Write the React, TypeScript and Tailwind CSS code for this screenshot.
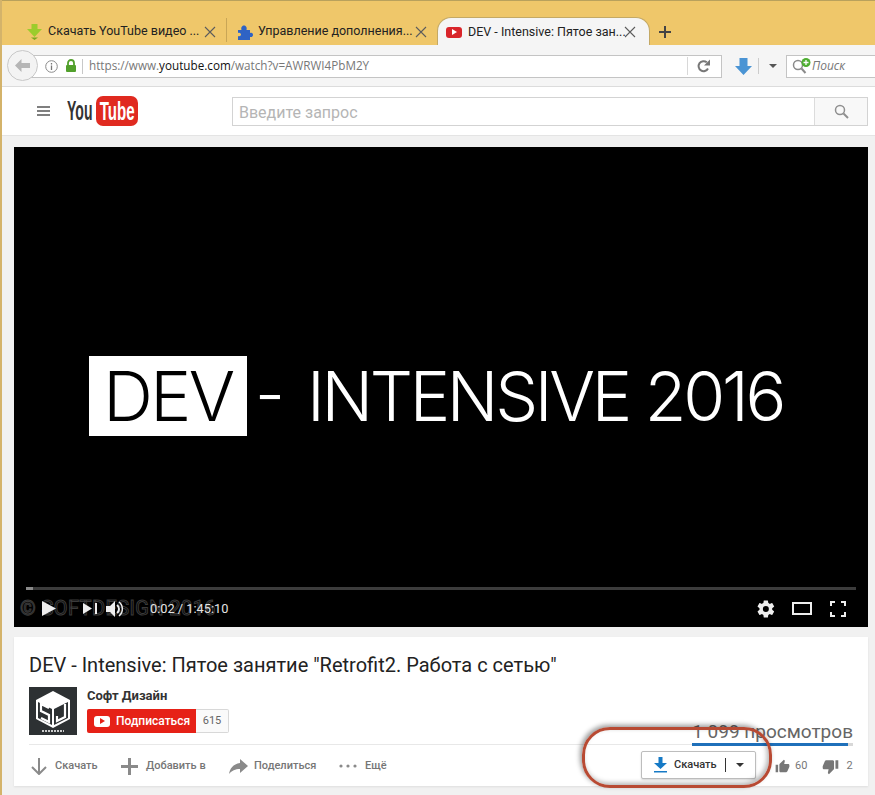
import React from 'react';

const tabFont = "[font-family:Roboto,'Noto_Sans',sans-serif]";
const uiFont = "[font-family:'Open_Sans','Noto_Sans',sans-serif]";
const ytFont = "[font-family:Roboto,'Noto_Sans',sans-serif]";
const logoFont = "[font-family:'Liberation_Sans',sans-serif]";

const CloseIcon: React.FC = () => (
  <svg width="12" height="12" viewBox="0 0 12 12" className="shrink-0">
    <path d="M1 1l10 10M11 1L1 11" stroke="#5c5c5c" strokeWidth="1.1" fill="none" />
  </svg>
);

const Gear: React.FC = () => (
  <svg width="20" height="20" viewBox="0 0 24 24" fill="#eeeeee">
    <path d="M19.4 13c.04-.32.06-.66.06-1s-.02-.68-.07-1l2.16-1.68c.2-.15.25-.42.13-.64l-2.05-3.54c-.12-.22-.4-.3-.62-.22l-2.55 1.02c-.53-.4-1.1-.74-1.72-1l-.38-2.7A.5.5 0 0 0 13.86 1.8H9.77c-.25 0-.46.18-.5.42l-.38 2.7c-.62.26-1.2.6-1.72 1L4.62 4.9c-.23-.08-.5 0-.62.22L1.95 8.68c-.13.22-.07.5.12.64L4.24 11c-.05.32-.08.67-.08 1s.02.68.07 1l-2.16 1.68c-.2.15-.25.42-.13.64l2.05 3.54c.12.22.4.3.62.22l2.55-1.02c.53.4 1.1.74 1.72 1l.38 2.7c.04.24.25.42.5.42h4.09c.25 0 .46-.18.5-.42l.38-2.7c.62-.26 1.2-.6 1.72-1l2.55 1.02c.23.08.5 0 .62-.22l2.05-3.54c.12-.22.07-.5-.13-.64L19.4 13zM11.82 15.6a3.6 3.6 0 1 1 0-7.2 3.6 3.6 0 0 1 0 7.2z" />
  </svg>
);

const ActionItem: React.FC<{ icon: React.ReactNode; label: string; className: string }> = ({ icon, label, className }) => (
  <div className={`flex items-center pt-[2px] ${className}`}>
    {icon}
    <span className="text-[11px] font-medium text-[#767676]">{label}</span>
  </div>
);

export default function App() {
  return (
    <div className={`relative h-[795px] w-[875px] overflow-hidden bg-[#f1f1f1] ${ytFont}`}>
      {/* вкладки */}
      <div className={`flex h-[45px] items-end border-t border-[#b9a15c] bg-[#efc76a] pl-[27px] ${tabFont}`}>
        <div className="flex h-[28px] w-[199px] items-center pt-[1px]">
          <svg width="15" height="16" viewBox="0 0 15 16" className="mr-[6px] shrink-0">
            <path d="M4.5 0h6v5H15l-7.5 8L0 5h4.500z" fill="#9ccc2c" />
            <path d="M4 13.500h7L7.500 16z" fill="#7aa81e" />
          </svg>
          <span className="w-[156px] text-[12.5px] whitespace-nowrap text-[#222]">Скачать YouTube видео ...</span>
          <CloseIcon />
        </div>
        <div className="mb-[3px] h-[24px] w-px bg-[#c9a656]" />
        <div className="ml-[10px] flex h-[28px] w-[200px] items-center pt-[1px]">
          <svg width="16" height="16" viewBox="0 0 16 16" className="mr-[5px] shrink-0">
            <path d="M1 6h3.500c-.8-3 .8-4.500 2.500-4.500S10.300 3 9.500 6H13v3c2.500-.8 3 1 3 2s-.8 2.500-3 2v3H1v-4c2 .6 3-.5 3-1.500S3 8 1 9z" fill="#2f63c4" />
          </svg>
          <span className="w-[157px] text-[12.5px] whitespace-nowrap text-[#222]">Управление дополнения...</span>
          <CloseIcon />
        </div>
        <div className="flex h-[28px] w-[213px] items-center rounded-t-[14px] border border-b-0 border-[#c4a965] bg-[#f5f5f5] pt-[1px] pl-[8px]">
          <span className="mr-[6px] flex h-[11px] w-[16px] shrink-0 items-center justify-center rounded-[3px] bg-[#d9252a]">
            <span className="ml-px h-0 w-0 border-y-[3px] border-l-[5px] border-y-transparent border-l-white" />
          </span>
          <span className="w-[156px] text-[12.5px] whitespace-nowrap text-[#222]">DEV - Intensive: Пятое зан...</span>
          <CloseIcon />
        </div>
        <svg width="12" height="12" viewBox="0 0 12 12" className="mb-[7px] ml-[9px]">
          <path d="M6 0v12M0 6h12" stroke="#444" strokeWidth="2" />
        </svg>
      </div>

      {/* панель адреса */}
      <div className={`relative flex h-[42px] items-center border-b border-[#dcdcdc] bg-[#f5f5f5] pt-[1px] pl-[30px] ${uiFont}`}>
        <div className="absolute top-[5px] left-[7px] z-10 flex h-[31px] w-[31px] items-center justify-center rounded-full border border-[#c8c8c8] bg-[#f3f3f3]">
          <svg width="15" height="13" viewBox="0 0 15 13">
            <path d="M0 6.500L6.500 0v4H15v5H6.500v4z" fill="#b5b5b5" />
          </svg>
        </div>
        <div className="flex h-[23px] w-[692px] items-center border border-l-0 border-[#c4c4c4] bg-white pl-[15px]">
          <svg width="13" height="13" viewBox="0 0 13 13" className="mr-[7px]">
            <circle cx="6.500" cy="6.500" r="5.800" fill="none" stroke="#8a8a8a" />
            <path d="M6.500 3v1.400M6.500 5.600V10" stroke="#777" strokeWidth="1.300" />
          </svg>
          <svg width="12" height="14" viewBox="0 0 12 14" className="mr-[5px]">
            <path d="M3 6V4a3 3 0 0 1 6 0v2" fill="none" stroke="#52a02c" strokeWidth="1.800" />
            <rect x="1" y="6" width="10" height="7" rx="1" fill="#52a02c" />
          </svg>
          <div className="mr-[6px] h-[15px] w-px bg-[#c8c8c8]" />
          <span className="w-[598px] text-[11.7px] whitespace-nowrap text-[#777]">
            https://www.<span className="text-[#111]">youtube.com</span>/watch?v=AWRWI4PbM2Y
          </span>
          <div className="h-[18px] w-px bg-[#d8d8d8]" />
          <svg width="14" height="14" viewBox="0 0 14 14" className="ml-[9px]">
            <path d="M11 9.500A5 5 0 1 1 9.800 3.300" fill="none" stroke="#777" strokeWidth="2" />
            <path d="M13 0.500V6.500H7z" fill="#777" />
          </svg>
        </div>
        <svg width="17" height="17" viewBox="0 0 17 17" className="ml-[13px]">
          <path d="M4.500 0h8v8H17l-8.500 9L0 8h4.500z" fill="#4a94d4" />
        </svg>
        <div className="mx-[6px] h-[16px] w-px bg-[#cccccc]" />
        <span className="ml-[4px] h-0 w-0 border-x-[4px] border-t-[4px] border-x-transparent border-t-[#555]" />
        <div className="ml-[9px] flex h-[23px] flex-1 items-center border border-r-0 border-[#c4c4c4] bg-white pl-[5px]">
          <svg width="20" height="16" viewBox="0 0 20 16">
            <circle cx="6" cy="7" r="4.500" fill="none" stroke="#8a8a8a" strokeWidth="1.500" />
            <path d="M9.500 10.500L13.500 15" stroke="#8a8a8a" strokeWidth="2" />
            <circle cx="14" cy="4.500" r="4.500" fill="#4fae32" />
            <path d="M14 2v5M11.500 4.500h5" stroke="#fff" strokeWidth="1.300" />
          </svg>
          <span className="text-[12px] text-[#777] italic">Поиск</span>
        </div>
      </div>

      {/* шапка ютуба */}
      <div className="flex h-[49px] items-center border-b border-[#e4e4e4] bg-white pr-[7px] pl-[37px]">
        <svg width="13" height="10" viewBox="0 0 13 10" className="mr-[17px] shrink-0">
          <path d="M0 1h13M0 5h13M0 9h13" stroke="#555" strokeWidth="1.700" />
        </svg>
        <div className={`w-[29px] shrink-0 text-[27px] leading-none font-bold text-[#333] ${logoFont}`}>
          <span className="inline-block origin-left scale-x-[0.52]">You</span>
        </div>
        <div className={`flex h-[30px] w-[42px] shrink-0 items-center justify-center rounded-[7px] bg-[#e02a20] text-[26px] leading-none font-bold text-white ${logoFont}`}>
          <span className="inline-block scale-x-[0.58]">Tube</span>
        </div>
        <div className="mt-[1px] ml-[94px] flex h-[29px] flex-1 items-stretch border border-[#d3d3d3] bg-white">
          <span className="flex-1 pl-[6px] text-[16px] leading-[29px] text-[#b5b5b5]">Введите запрос</span>
          <div className="flex w-[53px] items-center justify-center border-l border-[#dcdcdc] bg-[#f8f8f8]">
            <svg width="15" height="15" viewBox="0 0 15 15">
              <circle cx="6" cy="6" r="4.500" fill="none" stroke="#8f8f8f" strokeWidth="1.500" />
              <path d="M9.500 9.500L14 14" stroke="#8f8f8f" strokeWidth="2" />
            </svg>
          </div>
        </div>
      </div>

      {/* плеер */}
      <div className="relative mx-[14px] mt-[11px] flex h-[480px] w-[854px] flex-col bg-black">
        <div className="flex flex-1 items-start pt-[209px] pl-[75px] [font-family:Inter,sans-serif]">
          <div className="flex h-[80px] w-[158px] items-center justify-center bg-white text-[69px] leading-none font-light tracking-[-2.500px] text-black">DEV</div>
          <span className="mt-[5px] ml-[8px] text-[66px] leading-none font-light whitespace-nowrap text-white">-</span>
          <span className="mt-[6px] ml-[22px] text-[68px] leading-none font-light tracking-[-3.300px] whitespace-nowrap text-white">INTENSIVE 2016</span>
        </div>
        <div className="mx-[12px] mb-[8px] flex h-[3px] bg-[#3c3c3c]">
          <div className="h-full w-[7px] bg-[#8a8a8a]" />
        </div>
        <div className="relative flex h-[21px] items-center pl-[28px] text-[#eeeeee]">
          <span className="absolute top-0 left-[6px] text-[20px] leading-[21px] tracking-[0.400px] whitespace-nowrap text-transparent [-webkit-text-stroke:1px_#3a3a3a]">© SOFTDESIGN 2016</span>
          <svg width="14" height="15" viewBox="0 0 14 15" className="relative">
            <path d="M0 0l14 7.500L0 15z" fill="#eeeeee" />
          </svg>
          <svg width="14" height="11" viewBox="0 0 14 11" className="relative ml-[27px]">
            <path d="M0 0l9 5.500L0 11z" fill="#eeeeee" />
            <path d="M12 0h2v11h-2z" fill="#eeeeee" />
          </svg>
          <svg width="18" height="16" viewBox="0 0 18 16" className="relative ml-[9px]">
            <path d="M0 5h4l5-5v16l-5-5H0z" fill="#eeeeee" />
            <path d="M11 4a5 5 0 0 1 0 8" fill="none" stroke="#eeeeee" strokeWidth="2" />
            <path d="M13 1a9 9 0 0 1 0 14" fill="none" stroke="#eeeeee" strokeWidth="1.500" />
          </svg>
          <span className="relative ml-[26px] text-[12.800px] text-[#e4e4e4]">0:02 / 1:45:10</span>
          <div className="ml-auto flex items-center pr-[22px]">
            <Gear />
            <div className="mr-[18px] ml-[16px] h-[13px] w-[20px] border-2 border-[#eeeeee]" />
            <svg width="16" height="16" viewBox="0 0 16 16">
              <path d="M1 5V1h4M11 1h4v4M15 11v4h-4M5 15H1v-4" fill="none" stroke="#eeeeee" strokeWidth="2" />
            </svg>
          </div>
        </div>
        <div className="h-[8px] bg-black" />
      </div>

      {/* блок под видео */}
      <div className="mx-[14px] mt-[10px] h-[149px] w-[854px] bg-white px-[15px] shadow-[0_1px_2px_rgba(0,0,0,0.08)]">
        <h1 className="pt-[15px] text-[20px] leading-[26px] font-normal whitespace-nowrap text-[#222]">DEV - Intensive: Пятое занятие "Retrofit2. Работа с сетью"</h1>
        <div className="mt-[9px] flex h-[58px] items-start border-b border-[#e8e8e8]">
          <div className="flex h-[48px] w-[48px] shrink-0 items-center justify-center bg-[#2d3133]">
            <svg width="36" height="42" viewBox="0 0 36 42">
              <path d="M18 1L35 10V29L18 38L1 29V10Z" fill="#ffffff" />
              <path d="M3 12L17 19V35L3 28Z" fill="#2d3133" />
              <path d="M33 12L19 19V35L33 28Z" fill="#2d3133" />
              <path d="M14 18L6 14V21L14 25V32L6 28" fill="none" stroke="#ffffff" strokeWidth="2.200" />
              <path d="M30 14V27L22 31V26" fill="none" stroke="#ffffff" strokeWidth="2.200" />
              <path d="M7 41H29" stroke="#ffffff" strokeWidth="1.500" strokeDasharray="2 1" />
            </svg>
          </div>
          <div className="ml-[10px]">
            <div className="text-[13px] leading-[17px] font-bold text-[#333]">Софт Дизайн</div>
            <div className="mt-[5px] flex h-[24px]">
              <div className="flex w-[109px] items-center rounded-l-[2px] bg-[#e62117] pl-[7px] text-[12px] font-medium text-white">
                <span className="mr-[6px] flex h-[11px] w-[16px] items-center justify-center rounded-[3px] bg-white">
                  <span className="ml-px h-0 w-0 border-y-[3px] border-l-[5px] border-y-transparent border-l-[#e62117]" />
                </span>
                Подписаться
              </div>
              <div className="flex w-[33px] items-center justify-center rounded-r-[2px] border border-l-0 border-[#d8d8d8] bg-[#fafafa] text-[11px] text-[#666]">615</div>
            </div>
          </div>
          <div className="ml-auto flex h-[58px] w-[161px] flex-col items-end justify-end">
            <div className="text-[19px] leading-[22px] whitespace-nowrap text-[#666]">1 099 просмотров</div>
            <div className="mb-[-1px] flex h-[3px] w-full bg-[#d8d8d8]">
              <div className="h-full w-[156px] bg-[#1f70ba]" />
            </div>
          </div>
        </div>
        <div className="flex h-[40px] items-center">
          <ActionItem
            className="ml-[2px] w-[90px]"
            label="Скачать"
            icon={
              <svg width="16" height="17" viewBox="0 0 16 17" className="mr-[8px]">
                <path d="M8 0v16M1 9l7 7 7-7" fill="none" stroke="#8a8a8a" strokeWidth="2" />
              </svg>
            }
          />
          <ActionItem
            className="w-[108px]"
            label="Добавить в"
            icon={
              <svg width="17" height="17" viewBox="0 0 17 17" className="mr-[8px]">
                <path d="M8.500 0v17M0 8.500h17" stroke="#8a8a8a" strokeWidth="3" />
              </svg>
            }
          />
          <ActionItem
            className="w-[110px]"
            label="Поделиться"
            icon={
              <svg width="19" height="15" viewBox="0 0 19 15" className="mr-[6px]">
                <path d="M11 0l8 7-8 7V10C6 10 3 11.500 0 15c.8-5 4-10 11-11z" fill="#8a8a8a" />
              </svg>
            }
          />
          <ActionItem
            className="w-[100px]"
            label="Ещё"
            icon={
              <svg width="18" height="4" viewBox="0 0 18 4" className="mr-[8px]">
                <circle cx="2" cy="2" r="1.600" fill="#8a8a8a" />
                <circle cx="9" cy="2" r="1.600" fill="#8a8a8a" />
                <circle cx="16" cy="2" r="1.600" fill="#8a8a8a" />
              </svg>
            }
          />
          <div className="ml-[202px] flex h-[28px] w-[115px] shrink-0 items-center rounded-[2px] border border-[#bdbdbd] bg-white pl-[12px] shadow-[0_1px_2px_rgba(0,0,0,0.15)]">
            <svg width="13" height="16" viewBox="0 0 13 16" className="mr-[7px]">
              <path d="M4.500 0h4v6H13L6.500 12 0 6h4.500zM0 14h13v1.500H0z" fill="#167ac6" />
            </svg>
            <span className="text-[11px] font-medium text-[#333]">Скачать</span>
            <div className="ml-[8px] h-[14px] w-px bg-[#333]" />
            <span className="ml-[10px] h-0 w-0 border-x-[4px] border-t-[4px] border-x-transparent border-t-[#333]" />
          </div>
          <div className="ml-[19px] flex items-center pt-[2px] text-[11px] text-[#777]">
            <svg width="15" height="15" viewBox="0 0 24 24" fill="#777" className="mr-[5px]">
              <path d="M1 21h4V9H1v12zm22-11c0-1.100-.9-2-2-2h-6.310l.95-4.570.03-.32c0-.41-.17-.79-.44-1.060L14.170 1 7.590 7.590C7.220 7.950 7 8.450 7 9v10c0 1.100.9 2 2 2h9c.83 0 1.540-.5 1.840-1.220l3.020-7.050c.09-.23.14-.47.14-.73v-2z" />
            </svg>
            60
            <svg width="17" height="17" viewBox="0 0 24 24" fill="#777" className="mr-[7px] ml-[15px]">
              <path d="M15 3H6c-.83 0-1.540.5-1.840 1.220l-3.020 7.050c-.09.23-.14.47-.14.730v2c0 1.100.9 2 2 2h6.310l-.95 4.570-.03.32c0 .41.17.79.44 1.060L9.830 23l6.590-6.590c.36-.36.58-.86.58-1.410V5c0-1.100-.9-2-2-2zm4 0v12h4V3h-4z" />
            </svg>
            2
          </div>
        </div>
      </div>

      {/* пометка поверх скриншота */}
      <div className="absolute top-[727px] left-[582px] h-[61px] w-[190px] rounded-[28px] border-[3px] border-[#b84a33] shadow-[-2px_-2px_5px_rgba(0,0,0,0.4),inset_-2px_-2px_5px_rgba(0,0,0,0.3)]" />
      <div className="absolute top-0 bottom-0 left-0 w-[2px] bg-[#d4b36a]" />
    </div>
  );
}
